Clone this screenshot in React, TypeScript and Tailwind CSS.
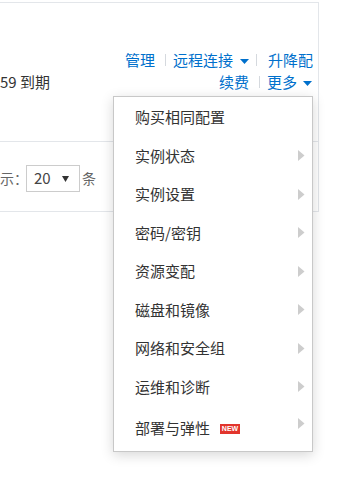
import React from 'react';

const items = ['购买相同配置', '实例状态', '实例设置', '密码/密钥', '资源变配', '磁盘和镜像', '网络和安全组', '运维和诊断'];

const Caret = () => (
  <svg width="9" height="5" viewBox="0 0 9 5" className="block">
    <path d="M0 0h9L4.5 5z" fill="#0070cc" />
  </svg>
);

const Arrow = ({ className = '' }: { className?: string }) => (
  <svg width="7" height="11" viewBox="0 0 7 11" className={`block ${className}`}>
    <path d="M0 0l6.5 5.5L0 11z" fill="#cdcdcd" />
  </svg>
);

const Sep = () => <span className="block w-px h-[12px] bg-[#d5d9de]" />;

export default function App() {
  return (
    <div
      className="relative w-[337px] h-[478px] overflow-hidden bg-white text-[#333]"
      style={{ fontFamily: '"Noto Sans CJK SC", "Noto Sans", sans-serif' }}
    >
      <div className="pt-[2px]">
        <div className="w-[319px] border-t border-r border-b border-[#e3e6ea]">
          {/* top row */}
          <div className="h-[138px] pt-[46px] text-[15px]">
            <div className="h-[22px] flex items-center justify-end pr-[5px] text-[#0070cc]">
              <span>管理</span>
              <span className="ml-[10px]"><Sep /></span>
              <span className="ml-[7px]">远程连接</span>
              <span className="ml-[7px] mt-[3px]"><Caret /></span>
              <span className="ml-[7px]"><Sep /></span>
              <span className="ml-[11px]">升降配</span>
            </div>
            <div className="h-[22px] flex items-center justify-between pr-[6px]">
              <span className="text-[#333]">59 到期</span>
              <div className="flex items-center text-[#0070cc]">
                <span>续费</span>
                <span className="ml-[10px]"><Sep /></span>
                <span className="ml-[7px]">更多</span>
                <span className="ml-[6px] mt-[3px]"><Caret /></span>
              </div>
            </div>
          </div>
          {/* pagination */}
          <div className="h-[70px] border-t border-[#e3e6ea] pt-[23px] flex items-start text-[14px] text-[#666]">
            <span className="h-[27px] leading-[27px]">示：</span>
            <div className="ml-[-2px] w-[54px] h-[27px] border border-[#cccccc] flex items-center justify-between pl-[7px] pr-[10px] text-[#444] text-[15px]">
              <span>20</span>
              <svg width="7" height="6" viewBox="0 0 7 6" className="block">
                <path d="M0 0h7L3.5 6z" fill="#333" />
              </svg>
            </div>
            <span className="ml-[2px] h-[27px] leading-[27px]">条</span>
          </div>
        </div>
      </div>

      {/* dropdown menu */}
      <div className="absolute left-[113px] top-[96px] w-[200px] h-[356px] bg-white border border-[#c8c8c8] shadow-[0_3px_12px_rgba(0,0,0,0.16)] pt-[1px] text-[15px] text-[#333]">
        {items.map((t, i) => (
          <div key={t} className="h-[38.5px] flex items-center justify-between pl-[21px] pr-[7px]">
            <span>{t}</span>
            {i > 0 && <Arrow />}
          </div>
        ))}
        <div className="h-[44px] flex items-center justify-between pl-[21px] pr-[7px]">
          <div className="flex items-center mt-[1px]">
            <span>部署与弹性</span>
            <span className="ml-[10px] w-[20px] h-[10px] bg-[#e2352d] text-white text-[7px] font-bold leading-[10px] text-center" style={{ fontFamily: '"Liberation Sans", Arial, sans-serif' }}>NEW</span>
          </div>
          <Arrow className="mb-[9px]" />
        </div>
      </div>
    </div>
  );
}
